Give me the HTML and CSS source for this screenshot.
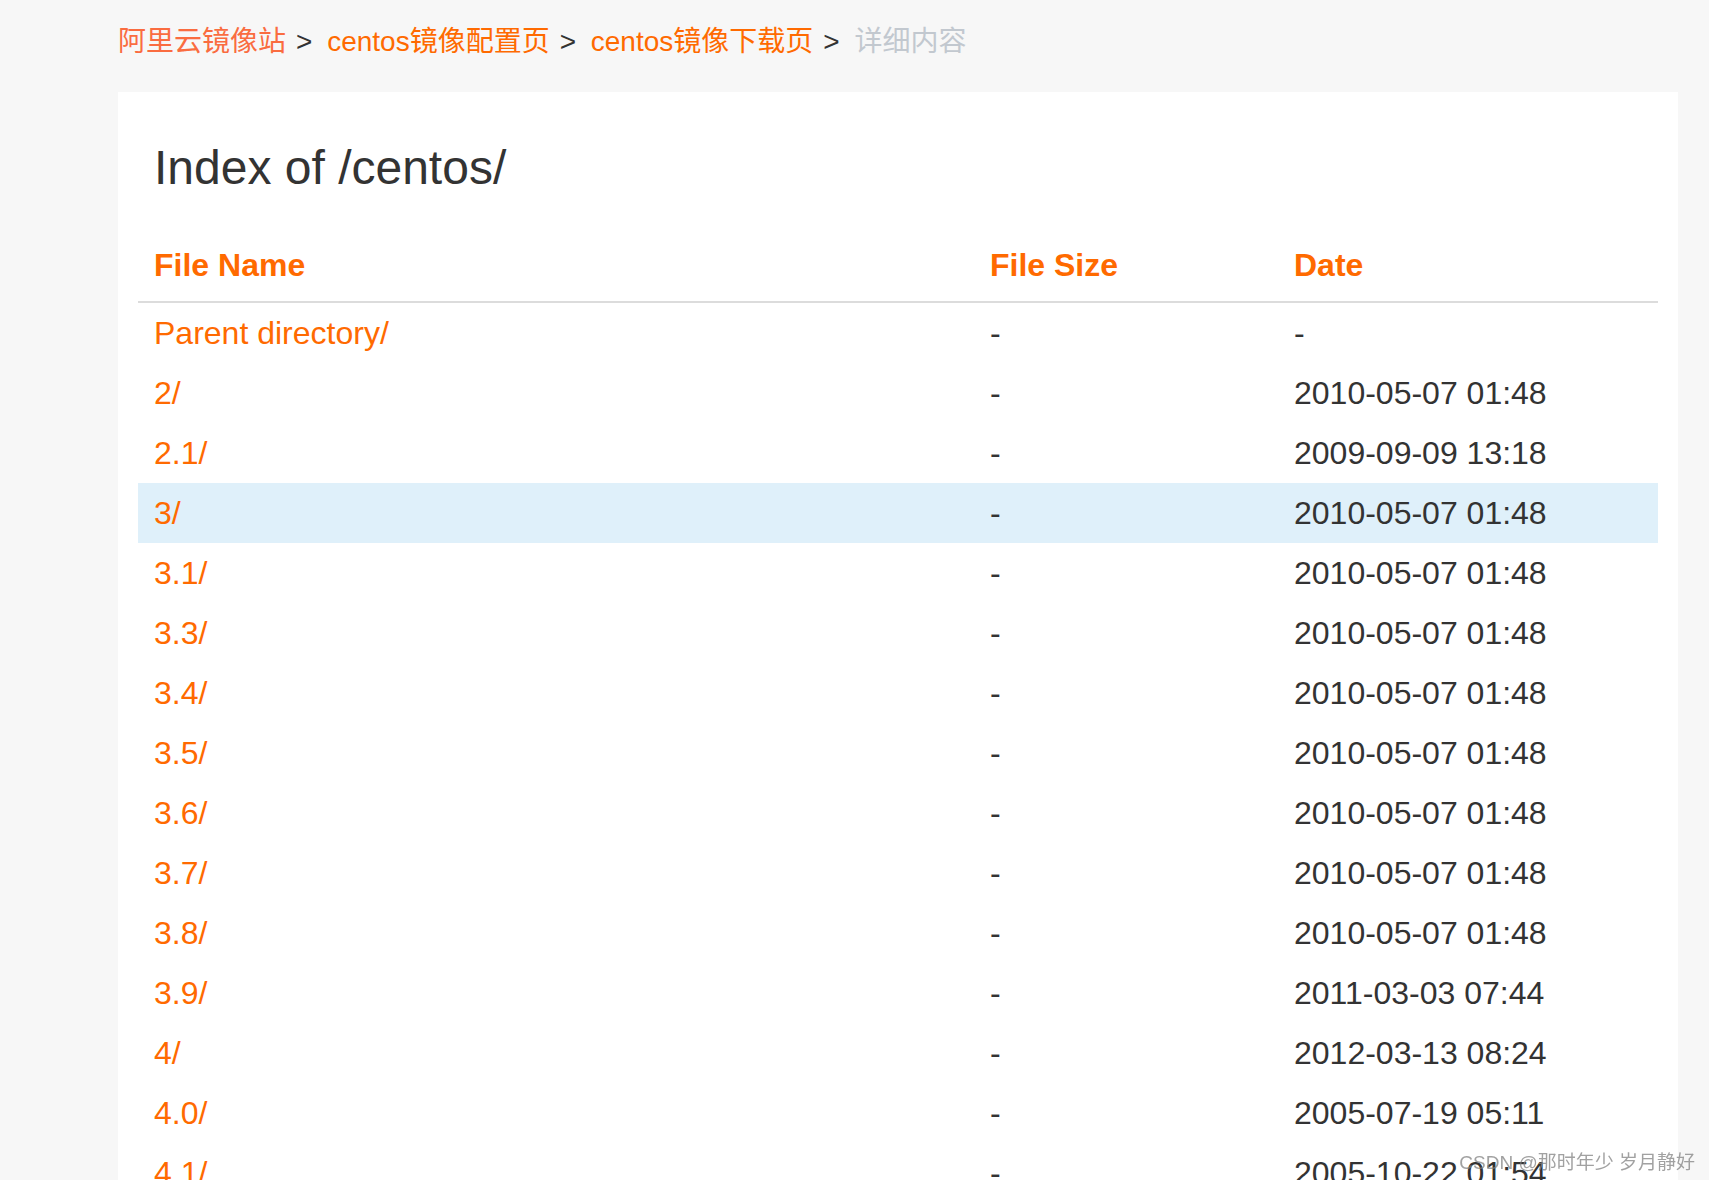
FILE: index.html
```html
<!DOCTYPE html>
<html lang="zh-CN">
<head>
    <meta charset="UTF-8">
    <title>Index of /centos/</title>
    <link rel="stylesheet" href="styles.css">
</head>
<body>
    <div class="page">
        <div class="crumbs">
            <a href="#" class="crumb crumb-first">阿里云镜像站</a><span class="sep">&gt;</span>
            <a href="#" class="crumb">centos镜像配置页</a><span class="sep">&gt;</span>
            <a href="#" class="crumb">centos镜像下载页</a><span class="sep">&gt;</span>
            <span class="crumb-current">详细内容</span>
        </div>

        <div class="card">
            <h1>Index of /centos/</h1>
            <table class="listing">
                <colgroup>
                    <col class="col-name">
                    <col class="col-size">
                    <col class="col-date">
                </colgroup>
                <thead>
                    <tr>
                        <th>File Name</th>
                        <th>File Size</th>
                        <th>Date</th>
                    </tr>
                </thead>
                <tbody>
                    <tr><td><a href="#">Parent directory/</a></td><td>-</td><td>-</td></tr>
                    <tr><td><a href="#">2/</a></td><td>-</td><td>2010-05-07 01:48</td></tr>
                    <tr><td><a href="#">2.1/</a></td><td>-</td><td>2009-09-09 13:18</td></tr>
                    <tr class="hover"><td><a href="#">3/</a></td><td>-</td><td>2010-05-07 01:48</td></tr>
                    <tr><td><a href="#">3.1/</a></td><td>-</td><td>2010-05-07 01:48</td></tr>
                    <tr><td><a href="#">3.3/</a></td><td>-</td><td>2010-05-07 01:48</td></tr>
                    <tr><td><a href="#">3.4/</a></td><td>-</td><td>2010-05-07 01:48</td></tr>
                    <tr><td><a href="#">3.5/</a></td><td>-</td><td>2010-05-07 01:48</td></tr>
                    <tr><td><a href="#">3.6/</a></td><td>-</td><td>2010-05-07 01:48</td></tr>
                    <tr><td><a href="#">3.7/</a></td><td>-</td><td>2010-05-07 01:48</td></tr>
                    <tr><td><a href="#">3.8/</a></td><td>-</td><td>2010-05-07 01:48</td></tr>
                    <tr><td><a href="#">3.9/</a></td><td>-</td><td>2011-03-03 07:44</td></tr>
                    <tr><td><a href="#">4/</a></td><td>-</td><td>2012-03-13 08:24</td></tr>
                    <tr><td><a href="#">4.0/</a></td><td>-</td><td>2005-07-19 05:11</td></tr>
                    <tr><td><a href="#">4.1/</a></td><td>-</td><td>2005-10-22 01:54</td></tr>
                </tbody>
            </table>
        </div>
    </div>

    <div class="watermark">CSDN @那时年少 岁月静好</div>
</body>
</html>
```

FILE: styles.css
```css
body {
    margin: 0;
    background: #f7f7f7;
    font-family: "Liberation Sans", Arial, "Noto Sans CJK SC", sans-serif;
    color: #333;
}
a {
    text-decoration: none;
    color: #ff6a00;
}
.page {
    padding: 21px 31px 0 118px;
}
/* breadcrumb */
.crumbs {
    font-size: 28px;
    line-height: 42px;
    height: 42px;
    margin-bottom: 29px;
    white-space: nowrap;
}
.crumb {
    color: #ff6a00;
}
.crumb-first {
    color: #fa6c40;
}
.sep {
    color: #333;
    padding: 0 7px 0 10px;
}
.crumb-current {
    color: #c2c8cf;
}
/* main card */
.card {
    background: #fff;
    padding: 49px 20px 0;
}
.card h1 {
    margin: 0 0 35px 16px;
    font-size: 48px;
    line-height: 53px;
    font-weight: normal;
    color: #333;
}
.listing {
    width: 100%;
    border-collapse: collapse;
    table-layout: fixed;
    font-size: 32px;
}
.col-name {
    width: 55%;
}
.col-size {
    width: 20%;
}
.col-date {
    width: 25%;
}
.listing th {
    text-align: left;
    color: #ff6a00;
    font-weight: bold;
    height: 72px;
    padding: 0 16px;
    border-bottom: 2px solid #dcdcdc;
}
.listing td {
    height: 60px;
    padding: 0 16px;
    color: #333;
    white-space: nowrap;
}
.listing tr.hover td {
    background: #dff0fa;
}
.watermark {
    position: fixed;
    right: 14px;
    bottom: 6px;
    font-size: 19px;
    color: rgba(130, 130, 130, 0.75);
}
```
